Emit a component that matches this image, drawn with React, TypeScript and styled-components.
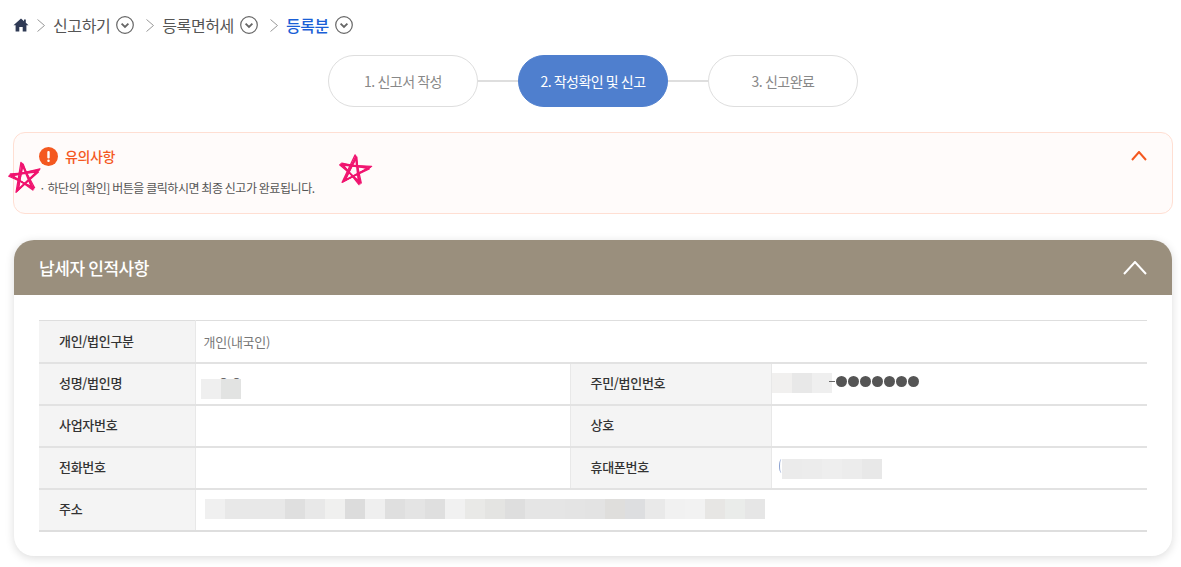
import React from "react";
import styled, { createGlobalStyle } from "styled-components";

const Global = createGlobalStyle`
  html, body { margin: 0; padding: 0; background: #fff; }
  body { font-family: "Noto Sans CJK KR", "Noto Sans", sans-serif; color: #333; overflow: hidden; }
`;

const Page = styled.div`
  width: 1181px;
  height: 567px;
  box-sizing: border-box;
  padding: 13px 8px 0 13px;
  position: relative;
  overflow: hidden;
`;

const Crumbs = styled.nav`
  display: flex;
  align-items: center;
  height: 24px;
  font-size: 16px;
  letter-spacing: -0.4px;
  color: #555;
`;

const HomeLink = styled.span`
  display: flex;
  width: 16px;
  height: 16px;
  margin-right: 7px;
`;

const Sep = styled.span`
  display: flex;
  width: 11px;
  margin-right: 6px;
`;

const CrumbItem = styled.span<{ $current?: boolean }>`
  color: ${(p) => (p.$current ? "#1a5fd6" : "#555")};
  font-weight: ${(p) => (p.$current ? 500 : 400)};
  margin-right: 6px;
  line-height: 24px;
`;

const CrumbToggle = styled.span`
  display: flex;
  width: 18px;
  height: 18px;
  margin-right: 11px;
`;

const Stepper = styled.ol`
  list-style: none;
  margin: 18px 0 0;
  padding: 0 0 0 315px;
  display: flex;
  align-items: center;
`;

const Step = styled.li<{ $active?: boolean }>`
  width: 150px;
  height: 52px;
  box-sizing: border-box;
  border-radius: 26px;
  border: 1px solid ${(p) => (p.$active ? "#4f7fce" : "#dedede")};
  background: ${(p) => (p.$active ? "#4f7fce" : "#fff")};
  color: ${(p) => (p.$active ? "#fff" : "#888")};
  font-size: 14px;
  letter-spacing: -0.5px;
  display: flex;
  align-items: center;
  justify-content: center;
`;

const Connector = styled.li`
  width: 40px;
  height: 2px;
  background: #dedede;
`;

const Notice = styled.section`
  position: relative;
  margin-top: 25px;
  width: 1160px;
  height: 82px;
  box-sizing: border-box;
  border: 1px solid #ffdfd3;
  border-radius: 12px;
  background: #fffbfa;
  padding: 13px 25px 0;
`;

const NoticeHead = styled.div`
  display: flex;
  align-items: center;
  gap: 7px;
  height: 20px;
  color: #f4581f;
  font-size: 14px;
  letter-spacing: -0.4px;
  font-weight: 500;
`;

const NoticeText = styled.p`
  margin: 13px 0 0;
  font-size: 12px;
  line-height: 18px;
  letter-spacing: -0.45px;
  color: #555;
`;

const NoticeChevron = styled.span`
  position: absolute;
  top: 18px;
  right: 25px;
  display: flex;
`;

const Star = styled.svg<{ $left: number; $top: number }>`
  position: absolute;
  left: ${(p) => p.$left}px;
  top: ${(p) => p.$top}px;
  width: 36px;
  height: 34px;
  overflow: visible;
`;

const Card = styled.section`
  margin: 26px 0 0 1px;
  width: 1158px;
  height: 316px;
  background: #fff;
  border-radius: 20px;
  box-shadow: 0 2px 10px rgba(0, 0, 0, 0.14);
  overflow: hidden;
`;

const CardHead = styled.header`
  height: 55px;
  background: #9a8f7d;
  color: #fff;
  display: flex;
  align-items: center;
  justify-content: space-between;
  padding: 0 25px;
  font-size: 17px;
  font-weight: 500;
  letter-spacing: -0.4px;
`;

const CardBody = styled.div`
  padding: 25px 25px 0;
`;

const Table = styled.table`
  width: 1108px;
  border-collapse: collapse;
  table-layout: fixed;
  border-top: 1px solid #dedede;
  border-bottom: 2px solid #dedede;
  font-size: 13px;
  letter-spacing: -0.3px;
`;

const Row = styled.tr`
  height: 42px;
  border-bottom: 2px solid #e2e2e2;
  &:last-child { border-bottom: 0; }
`;

const Th = styled.th`
  background: #f4f4f4;
  color: #333;
  font-weight: 500;
  text-align: left;
  padding: 0 0 2px 20px;
  border-left: 1px solid #e8e8e8;
  border-right: 1px solid #e8e8e8;
  &:first-child { border-left: 0; }
`;

const Td = styled.td`
  padding: 0 0 0 8px;
  color: #777;
  position: relative;
`;

const Mosaic = styled.div<{ $left: number; $top: number }>`
  position: absolute;
  left: ${(p) => p.$left}px;
  top: ${(p) => p.$top}px;
  display: flex;
`;

const Cell = styled.i<{ $c: string }>`
  display: block;
  width: 20px;
  height: 20px;
  background: ${(p) => p.$c};
`;

const Masked = styled.span`
  color: #555;
  font-size: 13px;
`;

const Hidden = styled.span`
  position: absolute;
  left: 9px;
  top: 7px;
  color: #666;
  letter-spacing: 1px;
`;

const Dots = styled.span`
  position: absolute;
  left: 57px;
  top: 12px;
  display: flex;
  align-items: center;
  gap: 0;
  color: #555;
  line-height: 16px;
`;

const Dash = styled.span`
  width: 6px;
  height: 1px;
  margin-right: 1px;
  background: #666;
`;

const Dot = styled.span`
  width: 11px;
  height: 11px;
  margin-right: 1px;
  border-radius: 50%;
  background: #555;
`;

const Paren = styled.span`
  position: absolute;
  left: 7px;
  top: 11px;
  width: 4px;
  height: 14px;
  border-left: 1px solid #8aa0d0;
  border-radius: 50%;
`;

const Shade = (colors: string[]) => colors.map((c, i) => <Cell key={i} $c={c} />);

const addr = [
  "#f0f0f0", "#e8e8e8", "#e8e8e8", "#e8e8e8", "#dfdfdf", "#e8e8e8", "#f0f0ef", "#dcdcdc", "#efefef", "#dfdfdf",
  "#e4e4e4", "#dfdfdf", "#f1f1f1", "#e9e9e7", "#e4e4e2", "#dedede", "#e5e5e5", "#e5e5e5", "#e4e4e4", "#e3e3e3",
  "#dfdedc", "#dddee0", "#e9e9e9", "#f1f1f1", "#f2f2f2", "#e7e6e4", "#eaecea", "#e6e6e6",
];

const Chevron = ({ c, w, h, sw }: { c: string; w: number; h: number; sw: number }) => (
  <svg width={w} height={h} viewBox={`0 0 ${w} ${h}`} fill="none">
    <path d={`M1 ${h - 1}L${w / 2} 1L${w - 1} ${h - 1}`} stroke={c} strokeWidth={sw} />
  </svg>
);

const Toggle = () => (
  <svg width="18" height="18" viewBox="0 0 18 18" fill="none">
    <circle cx="9" cy="9" r="8.3" stroke="#666" strokeWidth="1.2" />
    <path d="M5.6 7.6L9 11l3.4-3.4" stroke="#666" strokeWidth="1.8" />
  </svg>
);

const Arrow = () => (
  <svg width="11" height="15" viewBox="0 0 11 15" fill="none">
    <path d="M1.5 1.5L8.5 7.5L1.5 13.5" stroke="#999" strokeWidth="1" />
  </svg>
);

const StarMark = ({ left, top, rot }: { left: number; top: number; rot: number }) => (
  <Star $left={left} $top={top} viewBox="0 0 36 34" fill="none">
    <g transform={`rotate(${rot} 18 17)`} stroke="#f0146f" strokeWidth="1.3" strokeLinejoin="round">
      <path d="M8 30L17 3L25 30L3 13L33 12Z" />
      <path d="M9 29L18 4L24 31L4 12L32 14Z" />
      <path d="M7 31L16 2L26 29L2 14L34 11Z" />
      <path d="M10 28L17 5L23 28L5 14L31 13Z" />
    </g>
  </Star>
);

export default function App() {
  return (
    <Page>
      <Global />
      <Crumbs>
        <HomeLink>
          <svg width="16" height="16" viewBox="0 0 16 16">
            <path d="M8 1.5L0.5 8.3H2.6V14.5H6.3V10H9.7V14.5H13.4V8.3H15.5L12.8 5.8V2.5H11V4.2Z" fill="#2f3a55" />
          </svg>
        </HomeLink>
        <Sep><Arrow /></Sep>
        <CrumbItem>신고하기</CrumbItem>
        <CrumbToggle><Toggle /></CrumbToggle>
        <Sep><Arrow /></Sep>
        <CrumbItem>등록면허세</CrumbItem>
        <CrumbToggle><Toggle /></CrumbToggle>
        <Sep><Arrow /></Sep>
        <CrumbItem $current>등록분</CrumbItem>
        <CrumbToggle><Toggle /></CrumbToggle>
      </Crumbs>

      <Stepper>
        <Step>1. 신고서 작성</Step>
        <Connector />
        <Step $active>2. 작성확인 및 신고</Step>
        <Connector />
        <Step>3. 신고완료</Step>
      </Stepper>

      <Notice>
        <NoticeHead>
          <svg width="19" height="19" viewBox="0 0 19 19">
            <circle cx="9.5" cy="9.5" r="9.5" fill="#f4581f" />
            <rect x="8.3" y="4" width="2.4" height="7.4" rx="1" fill="#fff" />
            <rect x="8.3" y="12.6" width="2.4" height="2.4" rx="1" fill="#fff" />
          </svg>
          유의사항
        </NoticeHead>
        <NoticeText>· 하단의 [확인] 버튼을 클릭하시면 최종 신고가 완료됩니다.</NoticeText>
        <NoticeChevron><Chevron c="#f4581f" w={16} h={10} sw={2} /></NoticeChevron>
      </Notice>

      <Card>
        <CardHead>
          납세자 인적사항
          <Chevron c="#fff" w={24} h={14} sw={2} />
        </CardHead>
        <CardBody>
          <Table>
            <colgroup>
              <col width="156" />
              <col width="375" />
              <col width="201" />
              <col width="376" />
            </colgroup>
            <tbody>
              <Row>
                <Th>개인/법인구분</Th>
                <Td colSpan={3}>개인(내국인)</Td>
              </Row>
              <Row>
                <Th>성명/법인명</Th>
                <Td>
                  <Hidden>ㅡㅇㅇ</Hidden>
                  <Mosaic $left={5} $top={15}>{Shade(["#efefef", "#e2e3e2"])}</Mosaic>
                </Td>
                <Th>주민/법인번호</Th>
                <Td>
                  <Mosaic $left={0} $top={9}>{Shade(["#f1f0ef", "#e8e8e8", "#efefef"])}</Mosaic>
                  <Dots><Dash />{[0, 1, 2, 3, 4, 5, 6].map((i) => <Dot key={i} />)}</Dots>
                </Td>
              </Row>
              <Row>
                <Th>사업자번호</Th>
                <Td />
                <Th>상호</Th>
                <Td />
              </Row>
              <Row>
                <Th>전화번호</Th>
                <Td />
                <Th>휴대폰번호</Th>
                <Td>
                  <Paren />
                  <Mosaic $left={10} $top={11}>{Shade(["#ebebeb", "#ececec", "#eeeeee", "#ececec", "#e8e8e8"])}</Mosaic>
                </Td>
              </Row>
              <Row>
                <Th>주소</Th>
                <Td colSpan={3}>
                  <Masked />
                  <Mosaic $left={9} $top={9}>{Shade(addr)}</Mosaic>
                </Td>
              </Row>
            </tbody>
          </Table>
        </CardBody>
      </Card>

      <StarMark left={7} top={160} rot={-8} />
      <StarMark left={337} top={153} rot={8} />
    </Page>
  );
}
